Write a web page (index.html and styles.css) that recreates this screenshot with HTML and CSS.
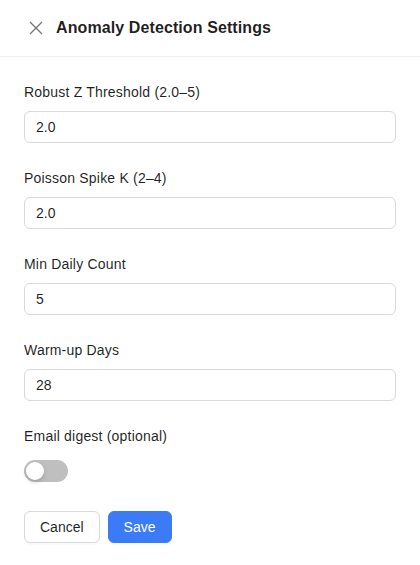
FILE: index.html
```html
<!DOCTYPE html>
<html>
<head>
<meta charset="utf-8">
<link rel="stylesheet" href="styles.css">
</head>
<body>
<div class="drawer">
  <div class="header">
    <button class="close" aria-label="Close">
      <svg width="14" height="14" viewBox="0 0 14 14"><path d="M1 1 L13 13 M13 1 L1 13" stroke="#737373" stroke-width="1.3" fill="none"/></svg>
    </button>
    <div class="title">Anomaly Detection Settings</div>
  </div>
  <form class="body">
    <div class="item">
      <label class="label">Robust Z Threshold (2.0–5)</label>
      <input class="input" value="2.0">
    </div>
    <div class="item">
      <label class="label">Poisson Spike K (2–4)</label>
      <input class="input" value="2.0">
    </div>
    <div class="item">
      <label class="label">Min Daily Count</label>
      <input class="input" value="5">
    </div>
    <div class="item">
      <label class="label">Warm-up Days</label>
      <input class="input" value="28">
    </div>
    <div class="item">
      <label class="label">Email digest (optional)</label>
      <div class="control"><span class="switch"><span class="handle"></span></span></div>
    </div>
    <div class="actions">
      <button type="button" class="btn">Cancel</button>
      <button type="button" class="btn primary">Save</button>
    </div>
  </form>
</div>
</body>
</html>
```
FILE: styles.css
```css
* { box-sizing: border-box; }
html, body { margin: 0; padding: 0; background: #fff; }
body {
  font-family: "Liberation Sans", Arial, sans-serif;
  font-size: 14px;
  color: rgba(0,0,0,0.88);
}
.drawer { width: 420px; }
.header {
  height: 57px;
  border-bottom: 1px solid #f0f0f0;
  display: flex;
  align-items: center;
  padding: 0 24px;
}
.close {
  border: 0;
  background: none;
  padding: 0;
  width: 20px;
  height: 20px;
  display: flex;
  align-items: center;
  justify-content: center;
  margin-right: 10px;
  margin-left: 2px;
}
.close svg { display: block; }
.title {
  font-size: 16px;
  font-weight: 700;
  color: rgba(0,0,0,0.88);
  letter-spacing: 0.1px;
}
.body { padding: 24px; }
.item { margin-bottom: 24px; display: flex; flex-direction: column; }
.label {
  line-height: 22px;
  height: 22px;
  margin-bottom: 8px;
  font-size: 14px;
  letter-spacing: 0.2px;
}
.input {
  height: 32px;
  width: 100%;
  border: 1px solid #d9d9d9;
  border-radius: 6px;
  padding: 4px 11px;
  font-family: inherit;
  font-size: 14px;
  color: rgba(0,0,0,0.88);
  outline: none;
}
.control { height: 32px; display: flex; align-items: center; }
.switch {
  width: 44px;
  height: 22px;
  border-radius: 11px;
  background: #bfbfbf;
  position: relative;
  display: inline-block;
}
.handle {
  position: absolute;
  top: 2px;
  left: 2px;
  width: 18px;
  height: 18px;
  border-radius: 50%;
  background: #fff;
  box-shadow: 0 2px 4px rgba(0,35,11,0.2);
}
.actions { display: flex; gap: 8px; }
.btn {
  height: 32px;
  padding: 4px 15px;
  border-radius: 6px;
  border: 1px solid #d9d9d9;
  background: #fff;
  font-family: inherit;
  font-size: 14px;
  color: rgba(0,0,0,0.88);
  box-shadow: 0 2px 0 rgba(0,0,0,0.02);
}
.btn.primary {
  background: #3b7bf6;
  border-color: #3b7bf6;
  color: #fff;
}
```
